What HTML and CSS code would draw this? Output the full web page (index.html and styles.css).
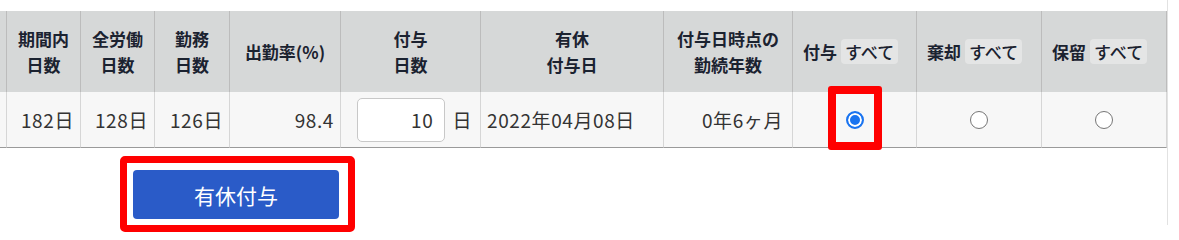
FILE: index.html
```html
<!DOCTYPE html>
<html lang="ja">
<head>
<meta charset="utf-8">
<link rel="stylesheet" href="styles.css">
</head>
<body>
<div class="page">
  <div class="grid">
    <div class="h c0"></div>
    <div class="h">期間内<br>日数</div>
    <div class="h">全労働<br>日数</div>
    <div class="h">勤務<br>日数</div>
    <div class="h">出勤率(%)</div>
    <div class="h">付与<br>日数</div>
    <div class="h">有休<br>付与日</div>
    <div class="h">付与日時点の<br>勤続年数</div>
    <div class="h sel">付与<span class="all">すべて</span></div>
    <div class="h sel">棄却<span class="all">すべて</span></div>
    <div class="h sel last">保留<span class="all">すべて</span></div>

    <div class="d c0"></div>
    <div class="d num">182日</div>
    <div class="d num">128日</div>
    <div class="d num">126日</div>
    <div class="d num">98.4</div>
    <div class="d days"><div class="input">10</div><span class="unit">日</span></div>
    <div class="d date">2022年04月08日</div>
    <div class="d num tenure">0年6ヶ月</div>
    <div class="d radio-cell"><span class="radio on"></span><span class="mark"></span></div>
    <div class="d radio-cell"><span class="radio"></span></div>
    <div class="d radio-cell last"><span class="radio"></span></div>
  </div>
  <div class="actions">
    <div class="frame"><button class="grant" type="button">有休付与</button></div>
  </div>
</div>
</body>
</html>
```

FILE: styles.css
```css
html, body {
  margin: 0;
  padding: 0;
  background: #fff;
}
body {
  font-family: "Noto Sans CJK JP", "Noto Sans", sans-serif;
  color: #333;
  min-height: 235px;
}
.page {
  width: 1168px;
  height: 225px;
  border-right: 1px solid #e2e2e2;
  padding-top: 11px;
  box-sizing: border-box;
}
.grid {
  display: grid;
  grid-template-columns: 6px 74px 74px 75px 111px 140px 183px 129px 124px 125px 126px;
  grid-template-rows: 81px 56px;
  width: 1168px;
}
.h {
  background: #d6d8d8;
  border-left: 1px solid #bcbcbc;
  display: flex;
  align-items: center;
  justify-content: center;
  text-align: center;
  font-weight: 700;
  font-size: 17px;
  line-height: 26px;
  color: #1b2230;
  box-sizing: border-box;
}
.h.c0, .d.c0 {
  border-left: none;
}
.h.last {
  border-right: 1px solid #bcbcbc;
}
.h.sel {
  justify-content: flex-start;
  padding-left: 10px;
  white-space: nowrap;
}
.all {
  background: #e4e5e5;
  border-radius: 4px;
  font-weight: 500;
  padding: 0 4px;
  margin-left: 4px;
  line-height: 25px;
}
.d {
  background: #f7f7f7;
  border-left: 1px solid #d6d6d6;
  border-bottom: 1px solid #9a9a9a;
  display: flex;
  align-items: center;
  font-size: 19px;
  letter-spacing: 0.6px;
  color: #333;
  box-sizing: border-box;
  white-space: nowrap;
}
.d.last {
  border-right: 1px solid #d6d6d6;
}
.d.num {
  justify-content: flex-end;
  padding-right: 6px;
}
.d.tenure {
  padding-right: 9px;
}
.d.date {
  padding-left: 6px;
}
.d.days {
  justify-content: flex-end;
  padding-right: 8px;
  gap: 7px;
}
.input {
  width: 88px;
  height: 44px;
  box-sizing: border-box;
  background: #fff;
  border: 1px solid #c8c8c8;
  border-radius: 5px;
  text-align: right;
  padding-right: 11px;
  line-height: 42px;
}
.radio-cell {
  justify-content: center;
  position: relative;
}
.radio {
  width: 18px;
  height: 18px;
  border-radius: 50%;
  box-sizing: border-box;
  border: 1px solid #767676;
  background: #fff;
}
.radio.on {
  border: 2px solid #1a74f0;
  background: #1a74f0;
  box-shadow: inset 0 0 0 2px #fff;
}
.mark {
  position: absolute;
  top: -6px;
  left: 50%;
  margin-left: -27px;
  width: 54px;
  height: 64px;
  box-sizing: border-box;
  border: 8px solid #f00;
  border-radius: 3px;
}
.actions {
  padding-left: 120px;
  padding-top: 8px;
  display: flex;
}
.frame {
  border: 7px solid #f00;
  border-radius: 5px;
  padding: 7px 9px 6px 6px;
}
.grant {
  display: block;
  width: 206px;
  height: 49px;
  border: none;
  border-radius: 4px;
  background: #2a5bc8;
  color: #fff;
  font-family: "Noto Sans CJK JP", "Noto Sans", sans-serif;
  font-size: 21px;
  padding: 0;
}
```
